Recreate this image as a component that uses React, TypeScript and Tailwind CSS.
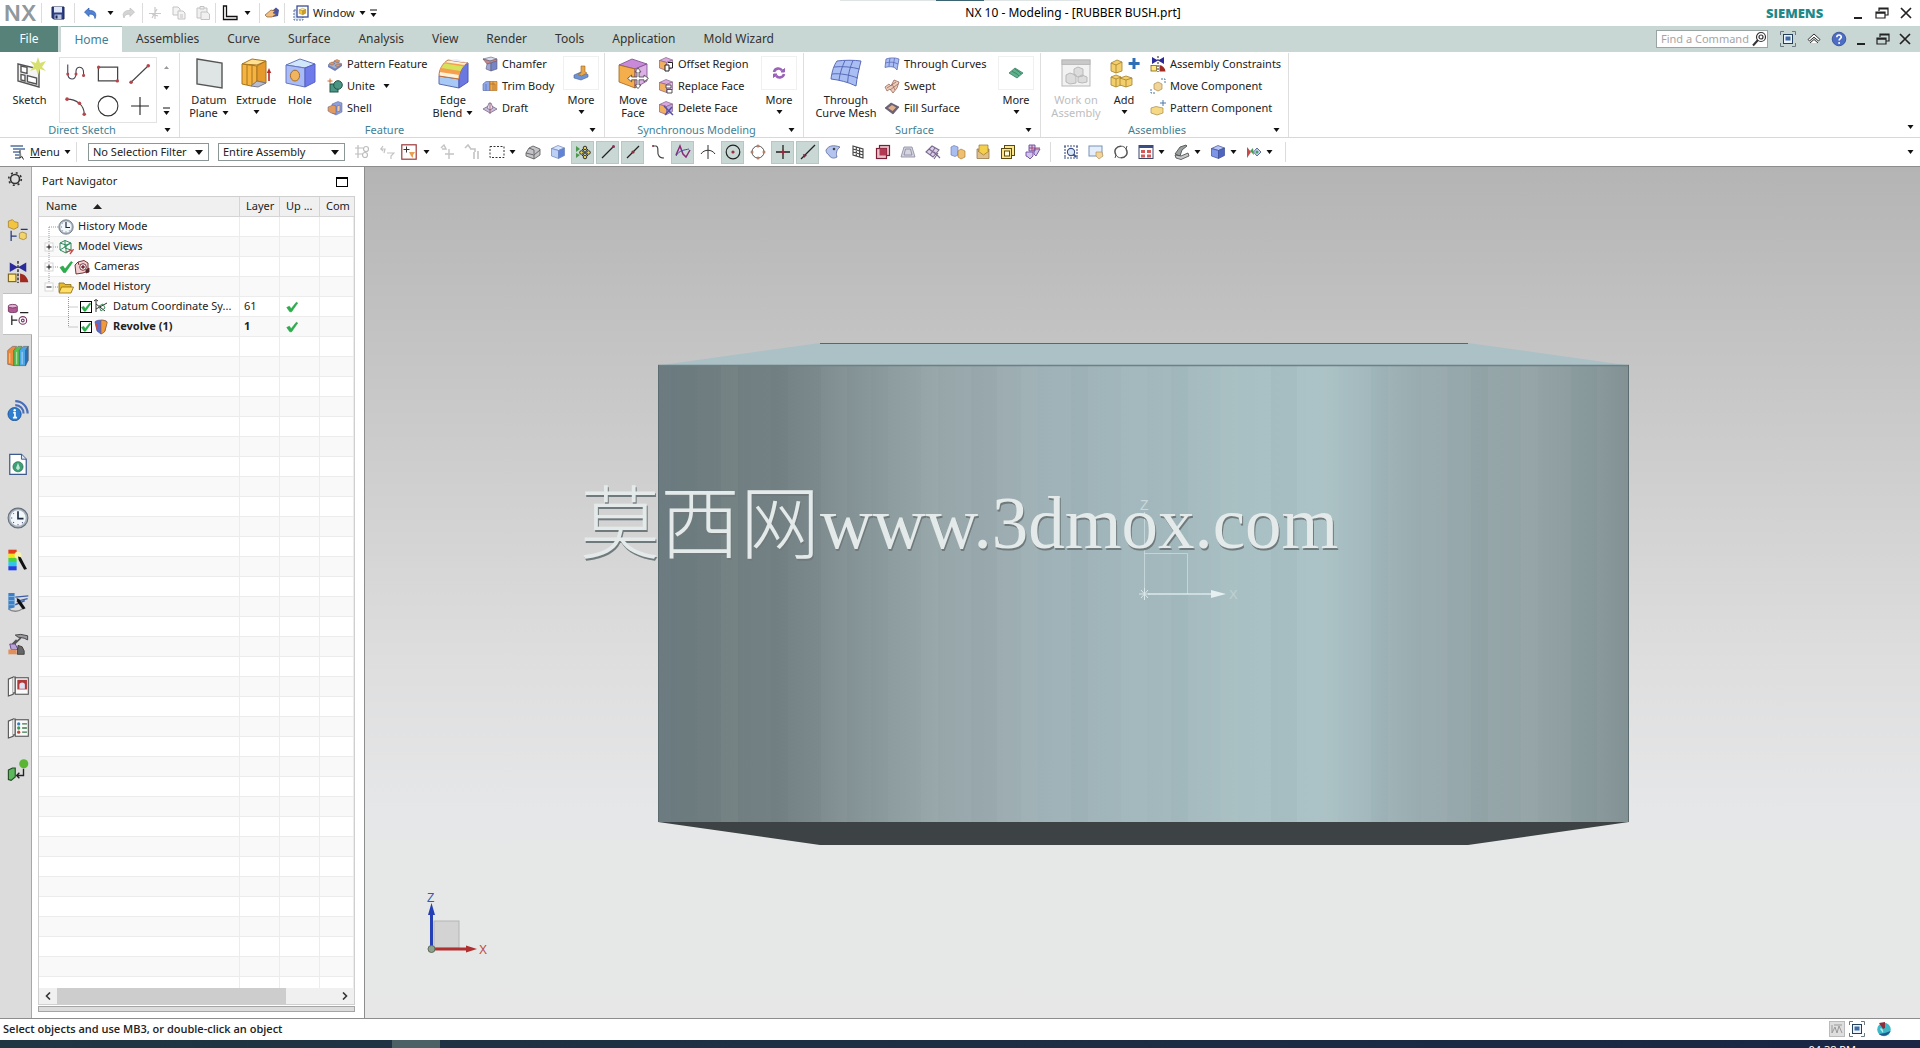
import React from "react";

type IconName = keyof typeof icons;

const CubeShape = ({ top, left, right, stroke = "#555" }: { top: string; left: string; right: string; stroke?: string }) => (
  <g stroke={stroke} strokeWidth={0.7} strokeLinejoin="round">
    <path d="M8 1.5 14.5 4 8.5 6.5 1.5 4.5Z" fill={top} />
    <path d="M1.5 4.5 8.5 6.5V14.5L1.5 12Z" fill={left} />
    <path d="M8.5 6.5 14.5 4V11.5L8.5 14.5Z" fill={right} />
  </g>
);

const Hourglass = () => (
  <g>
    <path d="M2 1 8 4.5 2 8Z" fill="#2a2a9a" />
    <path d="M14 1 8 4.5 14 8Z" fill="#2a2a9a" />
    <path d="M8 0V16" stroke="#222" strokeDasharray="2 1" />
    <rect x="1" y="9.5" width="5.5" height="5.5" fill="#ffe680" stroke="#7a6020" strokeWidth={0.8} />
    <path d="M9.500 9C13 9.500 15 12 15.500 15.500H9.500Z" fill="#a02a20" />
  </g>
);

const ClockFace = () => (
  <g>
    <circle cx="8" cy="8" r="7.200" fill="#a9b3bd" stroke="#65707c" strokeWidth={0.8} />
    <circle cx="8" cy="8" r="5.600" fill="#f2f7fb" />
    <path d="M8 3V8.500H12" fill="none" stroke="#1d2b40" strokeWidth={1.200} />
    <path d="M8 12.500V13.300M3 8H3.800M4.600 4.600 5 5M11 11.200 11.500 11.700M4.600 11.500 5 11" stroke="#446" strokeWidth={0.8} />
  </g>
);

const FilmDoor = () => (
  <g fill="#fafafa" stroke="#555" strokeWidth={0.8}>
    <path d="M1 3 4.500 1.500V14L1 15.200Z" />
    <path d="M4.500 1.500H6V13H4.500" />
    <rect x="6" y="2" width="9.500" height="12" />
  </g>
);

const icons = {
  save: (
    <g>
      <path d="M2 2H14V14H3.500L2 12.500Z" fill="#2c3f86" stroke="#1b2757" />
      <rect x="4" y="2" width="8" height="5.500" fill="#dfe7f5" />
      <rect x="4.500" y="9.500" width="7" height="4.500" fill="#b9c4dc" />
      <rect x="5.500" y="10.500" width="2" height="3" fill="#1b2757" />
    </g>
  ),
  undo: <path d="M1.500 7 6 3V5.500C11 5 14.500 8 12 13.500 11.500 10 9.500 8.800 6 9.200V11.500Z" fill="#4f83d6" stroke="#2c57a8" strokeWidth={0.7} />,
  redo: <path d="M14.500 7 10 3V5.500C5 5 1.500 8 4 13 4.500 10 6.500 8.800 10 9.200V11.500Z" fill="#d4d4d4" stroke="#bdbdbd" strokeWidth={0.7} />,
  cut: <path d="M8 2V14M2 8.500H14M10 4 5 13M5 9 11 11" stroke="#c9c9c9" strokeWidth={1.200} fill="none" />,
  copy: (
    <g fill="#f4f4f4" stroke="#c3c3c3">
      <path d="M2 2H7L9 4V10H2Z" />
      <path d="M7 6H12L14 8V14H7Z" />
      <path d="M9 10H12M9 12H12" />
    </g>
  ),
  paste: (
    <g fill="#f0f0f0" stroke="#c3c3c3">
      <path d="M2 3H12V13H2Z" />
      <path d="M5 1.500H9V4H5Z" />
      <path d="M6 7H12L14.500 9V14.500H6Z" />
    </g>
  ),
  ell: <path d="M1.500 1V14.500H15V11.500H4.500V1Z" fill="#fff" stroke="#111" strokeWidth={1.300} />,
  touch: (
    <g>
      <path d="M8 6 12 2.500 15 5 14 11 9 12Z" fill="#4c55a0" />
      <path d="M1 10 7 5 11 6 9 8 12 9 8 12 3 12Z" fill="#f0bf83" stroke="#8c5c30" strokeWidth={0.7} />
    </g>
  ),
  windows: (
    <g>
      <rect x="1" y="5" width="9" height="10" fill="#dde6f5" stroke="#5a6ea8" strokeDasharray="2 1" />
      <rect x="4" y="1" width="11" height="11" fill="#fff" stroke="#3c4e94" strokeWidth={1.300} />
      <g transform="translate(5.500 2.500) scale(.5)">
        <CubeShape top="#ffef8a" left="#f5c933" right="#d69f1e" stroke="#8d6b12" />
      </g>
    </g>
  ),
  minimize: <path d="M4 13H12" stroke="#222" strokeWidth={2} />,
  restore: <path d="M2 7H11V13H2ZM5 6V3H14V10H11.500M2 8.200H11M5 4H14" fill="none" stroke="#222" strokeWidth={1.200} />,
  close: <path d="M3 3 13 13M13 3 3 13" stroke="#222" strokeWidth={1.700} />,
  search: (
    <g fill="none" stroke="#333" strokeWidth={1.200}>
      <circle cx="10" cy="6" r="4.500" />
      <circle cx="10" cy="6" r="2" />
      <path d="M7 9 2 14.500" strokeWidth={2} />
    </g>
  ),
  fullscreen: (
    <g>
      <path d="M0.500 4V0.500H4M12 0.500H15.500V4M15.500 12V15.500H12M4 15.500H0.500V12" fill="none" stroke="#6a7a80" />
      <rect x="3.500" y="3.500" width="9" height="9" fill="#eef4ff" stroke="#24405c" />
      <rect x="5.500" y="5.500" width="5" height="4" fill="#3d6ba4" />
    </g>
  ),
  collapse: <path d="M2 8.500 8 3 14 8.500 12.500 10 8 6.200 3.500 10ZM4 12 8 8.500 12 12" fill="#fff" stroke="#333" />,
  help: (
    <g>
      <circle cx="8" cy="8" r="6.800" fill="#4d6cc4" stroke="#2f4793" strokeWidth={0.8} />
      <path d="M5.800 6.200C5.800 3.300 10.400 3.400 10.300 6.100 10.200 7.700 8.100 7.800 8.100 9.600" fill="none" stroke="#fff" strokeWidth={1.600} />
      <circle cx="8.100" cy="12" r="1" fill="#fff" />
    </g>
  ),
  studio: (
    <g>
      <path d="M2 3.500 12.500 6V15L2 12Z" fill="#f4f4f4" stroke="#555" strokeWidth={0.7} />
      <path d="M3.500 4.500 6.500 5.200V8.200L3.500 7.500ZM3.500 8.700 5.500 9.200V12L3.500 11.500ZM6.700 9.300 11.300 10.500V13.500L6.700 12.300Z" fill="#fff" stroke="#555" strokeWidth={0.7} />
      <path d="M12 0 13 3 16 2 14 5 16 7 13 6 12 9 11 6 8 7 10 4.500 8 2 11 3Z" fill="#d7e06e" />
    </g>
  ),
  profile: (
    <g fill="none" stroke="#445" strokeWidth={0.8}>
      <path d="M2 1V7C2 13 8 13 8 8V6C8 2 13.500 2 13.500 7V9" />
      <g fill="#b8444c" stroke="none">
        <circle cx="2" cy="8" r="1.100" />
        <circle cx="8" cy="8" r="1.100" />
        <circle cx="13.500" cy="9" r="1.100" />
      </g>
    </g>
  ),
  rect: (
    <g>
      <rect x="1" y="3" width="14" height="10" fill="none" stroke="#444" strokeWidth={0.9} />
      <circle cx="1.200" cy="3" r="1.200" fill="#b8444c" />
      <circle cx="14.800" cy="13" r="1.200" fill="#b8444c" />
    </g>
  ),
  line: (
    <g>
      <path d="M1.500 14 14 2" stroke="#444" strokeWidth={0.8} />
      <circle cx="1.500" cy="14" r="1.300" fill="#b8444c" />
      <circle cx="14" cy="2" r="1.300" fill="#b8444c" />
    </g>
  ),
  arc: (
    <g>
      <path d="M1.500 3C8 3 14 7 14 14" fill="none" stroke="#444" strokeWidth={0.8} />
      <circle cx="1.500" cy="3" r="1.300" fill="#b8444c" />
      <circle cx="10.500" cy="6" r="1.300" fill="#b8444c" />
      <circle cx="14" cy="14" r="1.300" fill="#b8444c" />
    </g>
  ),
  circle: <circle cx="8" cy="8" r="7.200" fill="none" stroke="#333" strokeWidth={0.8} />,
  plus: <path d="M8 1.500V14.500M1.500 8H14.500" stroke="#222" strokeWidth={0.8} />,
  datumPlane: <path d="M2 1 14.500 3V15.500L2 13.500Z" fill="#dfe5e5" stroke="#555" strokeWidth={0.7} />,
  extrude: (
    <g stroke="#a8741d" strokeWidth={0.5}>
      <path d="M1 3.500 6 1 13 2 8.500 4Z" fill="#ffdf92" />
      <path d="M1 3.500 8.500 4.500V12.500L5.500 14.500 1 13.500Z" fill="#f5b340" />
      <path d="M8.500 4.500 13 2V13L8.500 12Z" fill="#e69a2b" />
      <path d="M3.500 4V14M6 4.200V14" fill="none" />
      <path d="M5.500 14.500 8.500 12 13 13 9 15Z" fill="#b7bdd0" stroke="#778" />
      <path d="M14.500 12V7" stroke="#b52a2a" strokeWidth={0.8} />
      <path d="M13.400 8 14.500 5.500 15.600 8Z" fill="#b52a2a" stroke="none" />
    </g>
  ),
  hole: (
    <g>
      <path d="M1 4 8 1 15.500 3.500 10.500 5.500Z" fill="#cfe6fb" stroke="#6776c0" strokeWidth={0.5} />
      <path d="M1 4 10.500 5.500V15L1 13Z" fill="#a9bcf5" stroke="#6776c0" strokeWidth={0.5} />
      <path d="M10.500 5.500 15.500 3.500V12.500L10.500 15Z" fill="#6f7bea" stroke="#5560c0" strokeWidth={0.5} />
      <ellipse cx="5.500" cy="9.300" rx="2.300" ry="2.700" fill="#f1b560" stroke="#a86d21" strokeWidth={0.5} />
    </g>
  ),
  patternFeature: (
    <g>
      <path d="M1 9 8 5 15 8 8 13Z" fill="#9fb0d8" stroke="#56618c" strokeWidth={0.6} />
      <path d="M2 7.500 5 6 8 7.500 5 9ZM7 5 10 3.500 13 5 10 6.500ZM8 9.500 11 8 14 9 11 11Z" fill="#e09a66" stroke="#9a5a30" strokeWidth={0.5} />
      <path d="M1 9V11L8 15V13ZM8 13V15L15 10V8Z" fill="#6f7fb8" />
    </g>
  ),
  unite: (
    <g>
      <rect x="3" y="6" width="8" height="8" fill="#4a9583" stroke="#235547" />
      <circle cx="11" cy="7" r="4.300" fill="#4a9583" stroke="#235547" />
      <path d="M3 0.500V5.500M0.500 3H5.500" stroke="#c96a2d" />
    </g>
  ),
  shell: (
    <g stroke="#555f8c" strokeWidth={0.5}>
      <path d="M5 4 11 1.500 15 3V12L9 15 5 13Z" fill="#8f9fda" />
      <path d="M1 7 6 5 9 6V14L4 13 1 11Z" fill="#e39a5e" />
      <path d="M10 6 13 5V11L10 12Z" fill="#f0c9a0" />
    </g>
  ),
  edgeBlend: (
    <g strokeWidth={0.5}>
      <path d="M1 9.500 11 11V15.500L1 13.500Z" fill="#a8c8f5" stroke="#5c6cb0" />
      <path d="M11 11C11 7 13 4 15.500 3V12.500L11 15.500Z" fill="#6a78e0" stroke="#4c58b8" />
      <path d="M1 9.500C1 6 3 3 5.500 1.500L15.500 3C13 4 11 7 11 11Z" fill="#fff2d8" stroke="#c07030" />
      <path d="M1.300 7.500C1.800 5 3 3.300 4.300 2.600L14 4C12.500 5 11.500 7 11.200 9Z" fill="#f6a04f" />
      <path d="M2.200 5.500C2.800 4.300 3.400 3.600 4 3.200L13.300 4.700C12.500 5.300 12 6.200 11.700 7Z" fill="#d4e25c" />
      <path d="M5.500 1.500 10 1 15.500 3Z" fill="#eef" />
    </g>
  ),
  chamfer: (
    <g stroke="#5a5a78" strokeWidth={0.6}>
      <path d="M1 3 9 1 15 3 8 5Z" fill="#d8dcea" />
      <path d="M1 3 5 8 15 5V3L8 5Z" fill="#c98585" />
      <path d="M5 8 9 7V15L4 13Z" fill="#9aa6d6" />
      <path d="M9 7 15 5V13L9 15Z" fill="#7684c8" />
    </g>
  ),
  trimBody: (
    <g strokeWidth={0.6}>
      <path d="M1 6 4 3.500H8V12.500H1Z" fill="#8fa8e8" stroke="#4d5fa8" />
      <path d="M8 3.500H15V12.500H8Z" fill="#f0a94e" stroke="#a0641c" />
      <path d="M8 6H13V12M11 3.500V12.500" fill="none" stroke="#a0641c" />
      <path d="M4 6V12.500" stroke="#4d5fa8" />
    </g>
  ),
  draft: (
    <g fill="#c9bcd8" stroke="#6c5c80" strokeWidth={0.7}>
      <path d="M1 9 8 5 15 9 8 13Z" />
      <path d="M5 8 7 3 9 3 11 8 8 10Z" fill="#e8def0" />
      <path d="M8 3V14" stroke="#94404c" />
    </g>
  ),
  moreFeature: (
    <g>
      <path d="M1 10 8 7 15 9.500V12L8 15 1 13Z" fill="#6f93d0" stroke="#425f9c" strokeWidth={0.6} />
      <path d="M8 1H12V7L14 8 8.500 11 5 9 8 8Z" fill="#e8a64a" stroke="#9a6420" strokeWidth={0.6} />
    </g>
  ),
  moveFace: (
    <g>
      <path d="M1 4 7.500 1 15 3.500 9 6Z" fill="#c88ad8" stroke="#7a4a8c" strokeWidth={0.4} />
      <path d="M1 4 9 6V15.500L1 12.500Z" fill="#f5ae4c" stroke="#9a641c" strokeWidth={0.4} />
      <path d="M9 6 15 3.500V12L9 15.500Z" fill="#dcb0e6" stroke="#7a4a8c" strokeWidth={0.4} />
      <path d="M10.500 5.500 12 7.500H11V10H13.500V9L15.700 10.700 13.500 12.400V11.400H11V14H12L10.500 15.800 9 14H10V11.400H7.300V12.400L5.300 10.700 7.300 9V10H10V7.500H9Z" fill="#fff" stroke="#444" strokeWidth={0.4} />
    </g>
  ),
  offsetRegion: (
    <g>
      <CubeShape top="#dba8de" left="#f0b060" right="#e8b8e8" stroke="#86608c" />
      <path d="M7 9H11V15H7ZM10 6.500H14.500V12H11" fill="#fff" stroke="#222" strokeWidth={1} />
    </g>
  ),
  replaceFace: (
    <g>
      <CubeShape top="#dba8de" left="#f0b060" right="#e8b8e8" stroke="#86608c" />
      <path d="M8 7H13V10H8ZM9 11.500H14V15H9Z" fill="#fff" stroke="#444" strokeWidth={0.9} />
    </g>
  ),
  deleteFace: (
    <g>
      <CubeShape top="#dba8de" left="#f0b060" right="#b8a8e8" stroke="#86608c" />
      <path d="M6 6 15 15M14 7 7 15" stroke="#5b4f9c" strokeWidth={1.500} />
    </g>
  ),
  moreSync: (
    <g fill="none" stroke="#9a62b8" strokeWidth={2.600}>
      <path d="M3 7C4 3 9 2.500 11 5.500" />
      <path d="M13 9C12 13 7 13.500 5 10.500" />
      <path d="M10 7H13.500V3.500ZM6 9H2.500V12.500Z" strokeWidth={1} fill="#9a62b8" />
    </g>
  ),
  curveMesh: (
    <g fill="#a9bff3" stroke="#5a6ab8" strokeWidth={0.5}>
      <path d="M3.500 2C7 1.500 12 1.500 15.500 2 14.500 6 13.500 10 13 14.500 9 12.500 4.500 11.500 0.500 11 1 7 2 4 3.500 2Z" />
      <path d="M2 5C6 4.500 11 5 14.700 6M1 8.500C5 8 10 9 13.800 10.500M7.500 1.700C6 5 5 8 4.500 11.500M11.500 1.700C10 5 9 9 8.800 12.800" fill="none" />
    </g>
  ),
  throughCurves: (
    <g fill="#a9bff3" stroke="#5a6ab8" strokeWidth={0.8}>
      <path d="M2 3C6 1.500 11 1.500 15 3L13 14C11 10.500 6 10 1 11.500Z" />
      <path d="M6 2C5.500 5 5 8 5 10.500M10.500 2C10 5 9.500 8 9.300 11M1.500 7C6 5.500 10 6 14 8" fill="none" />
    </g>
  ),
  swept: (
    <g fill="#eccdbd" stroke="#9c6a58" strokeWidth={0.8}>
      <path d="M1 9 5 6 7 8 10 2 15 4 13 10 9 15 6 11 3 13Z" />
      <path d="M3 10 12 4M6 12 14 6M8 6 11 12" fill="none" />
    </g>
  ),
  fillSurface: (
    <g>
      <path d="M1 8 7 3 15 7 9 14Z" fill="#6e6478" stroke="#4a4252" strokeWidth={0.6} />
      <path d="M4 8 8 5 12 7.500 8.500 11Z" fill="#e3b08c" />
    </g>
  ),
  moreSurface: (
    <g>
      <path d="M1 8 7 3 15 8 9 13Z" fill="#5fb08c" stroke="#2c7558" strokeWidth={0.7} />
      <path d="M4 6C6 8 9 8 11 11M7 4C9 6 11 6 13 9" fill="none" stroke="#2c7558" strokeWidth={0.7} />
    </g>
  ),
  workOn: (
    <g stroke="#b9b9b9" strokeWidth={0.5}>
      <rect x="1" y="1.500" width="14" height="13" fill="#f2f2f2" />
      <rect x="1" y="1.500" width="14" height="2.200" fill="#c9c9c9" />
      <path d="M3 9 5 8 8 9V13L5 13.500 3 12.500ZM7 6 9 5 11.500 6V9.500L9 10 7 9ZM9 10 11 9 13.500 10V12.500L11 13 9 12.500Z" fill="#dcdcdc" />
    </g>
  ),
  add: (
    <g>
      <g stroke="#a5802c" strokeWidth={0.4} fill="#f3cf6b">
        <path d="M1.500 3 4.500 1.500 7 2.500V7L4 8 1.500 7Z" />
        <path d="M1.500 10 4 9 6.500 10V14L4 15 1.500 14Z" />
        <path d="M6 10.500 9 9.500 12 10.500V14L9 15 6 14Z" />
        <path d="M1.500 3 4 4 7 2.500M4 4V8M1.500 10 4 11 6.500 10M6 10.500 9 11.500 12 10.500M4 11V15M9 11.500V15" fill="none" />
      </g>
      <path d="M13 0.500V6M10.300 3.200H15.800" stroke="#2f6fb5" strokeWidth={1.500} />
    </g>
  ),
  constraints: <Hourglass />,
  moveComponent: (
    <g>
      <path d="M4 6 8 4 12 6V11L8 13 4 11Z" fill="#f0d49a" stroke="#a98a45" strokeWidth={0.7} />
      <path d="M11 1H15V5M1 11V15H5" fill="none" stroke="#4a7aa8" strokeDasharray="2 1" />
    </g>
  ),
  patternComponent: (
    <g>
      <path d="M1 8 6 6.500 13 8V13L7 15 1 13Z" fill="#f5d984" stroke="#a98a45" strokeWidth={0.7} />
      <path d="M13 0V6M10 3H16" stroke="#4a7aa8" />
    </g>
  ),
  menu: (
    <g fill="none" stroke="#54719c" strokeWidth={1.300}>
      <path d="M0.500 2H13M3 5H15M3 8H10M5 11H9M5 14H10" />
      <path d="M10 6V14L12 12.500 13.500 15.500" stroke="#333" fill="#ddd" strokeWidth={1} />
    </g>
  ),
  filterGray: (
    <g fill="none" stroke="#bdbdbd" strokeWidth={1.200}>
      <path d="M4 1V14M1 4H9M1 10H9" />
      <circle cx="12" cy="5" r="2.500" />
      <circle cx="11" cy="11" r="2.500" />
    </g>
  ),
  filterGray2: <path d="M1 5H6L5 9M4 2 2 5 4 7M8 9H15L12 12V15" fill="none" stroke="#c4c4c4" strokeWidth={1.200} />,
  snapBox: (
    <g fill="none">
      <rect x="0.800" y="0.800" width="14.400" height="14.400" stroke="#9b3a3a" strokeWidth={1.200} />
      <path d="M5.500 2.500V8.500M2.500 5.500H8.500" stroke="#333" />
      <path d="M8 8H14L12 11V14L10 12Z" fill="#e8a050" />
    </g>
  ),
  moveGray: <path d="M2 4 5 1 7 5H3M10 5V15M6 10H15" fill="none" stroke="#c4c4c4" strokeWidth={1.400} />,
  copyGray: <path d="M1 4 4 1 7 5M6 5H11V8M10 8V15M14 7V15" fill="none" stroke="#c4c4c4" strokeWidth={1.600} />,
  marquee: <rect x="1" y="2.500" width="14" height="11" fill="none" stroke="#333" strokeDasharray="2 1.500" />,
  grayBlock: (
    <g fill="#c3c3c8" stroke="#555" strokeWidth={0.8}>
      <path d="M1 9 4 4 8 2 15 5 15 11 9 15 1 12Z" />
      <path d="M1 9 9 11 15 6M9 11V15M4 4 9 6V10" fill="none" />
    </g>
  ),
  blueBlock: <CubeShape top="#d5e2fb" left="#bcd0f7" right="#5f83d9" stroke="#6d83b8" />,
  snapAll: (
    <g>
      <path d="M1 2 5 5 1 8ZM1 9 5 11 1 14Z" fill="#4a9a4a" />
      <path d="M7 5 13 12M13 5 7 12" stroke="#222" />
      <g fill="#e6d34a" stroke="#222" strokeWidth={0.9}>
        <circle cx="10" cy="4" r="1.800" />
        <circle cx="6.500" cy="8.500" r="1.800" />
        <circle cx="13.500" cy="8.500" r="1.800" />
        <circle cx="10" cy="13" r="1.800" />
      </g>
    </g>
  ),
  endPoint: (
    <g>
      <path d="M2 14 13 3" stroke="#222" strokeWidth={1.200} />
      <circle cx="13.500" cy="2.500" r="1.500" fill="#8c2f5a" />
    </g>
  ),
  midPoint: (
    <g>
      <path d="M2 14 14 2" stroke="#222" strokeWidth={1.200} />
      <circle cx="8" cy="8" r="1.600" fill="#8c2f3a" />
    </g>
  ),
  controlPoint: (
    <g>
      <path d="M3 2H6C10 3 6 9 9 12 10 14 12 14 14 14" fill="none" stroke="#444" strokeWidth={1.200} />
      <circle cx="3" cy="2" r="1" fill="#8c2f3a" />
    </g>
  ),
  pole: (
    <g fill="none" stroke="#8a2a78" strokeWidth={1.500}>
      <path d="M1 11 5 2 8 10 11 13 15 6" />
      <path d="M1 12C4 6 10 6 14 5" stroke="#444a9c" strokeWidth={1} />
    </g>
  ),
  intersection: <path d="M8 1V15M1 10C4 5 12 5 15 10" fill="none" stroke="#333" />,
  arcCenter: (
    <g>
      <circle cx="8" cy="8" r="6.800" fill="none" stroke="#222" strokeWidth={1.200} />
      <circle cx="8" cy="8" r="1.600" fill="#9c2f3a" />
    </g>
  ),
  quadrant: (
    <g>
      <circle cx="8" cy="8" r="6" fill="none" stroke="#555" />
      <g fill="#b8806a">
        <circle cx="8" cy="2" r="1.500" />
        <circle cx="8" cy="14" r="1.500" />
        <circle cx="2" cy="8" r="1.500" />
        <circle cx="14" cy="8" r="1.500" />
      </g>
    </g>
  ),
  existingPoint: (
    <g>
      <path d="M8 1V15M1 8H15" stroke="#222" strokeWidth={1.300} />
      <path d="M5.500 8H10.500M8 5.500V10.500" stroke="#a02a3a" strokeWidth={1.300} />
    </g>
  ),
  pointOnCurve: (
    <g>
      <path d="M1 15 15 1" stroke="#222" strokeWidth={1.200} />
      <path d="M3 10 7 11 4 14Z" fill="#7a2a3a" />
    </g>
  ),
  pointOnSurface: (
    <g>
      <path d="M1 6C4 1 9 1 15 3 11 6 11 10 12 13 9 15 5 14 4 11 2 10 1 8 1 6Z" fill="#b4c4ee" stroke="#5b6a9c" strokeWidth={0.8} />
      <circle cx="9" cy="5" r="1.300" fill="#444" />
    </g>
  ),
  grid: <path d="M3 2 13 5V14L3 11ZM3 5 13 8M3 8 13 11M6.300 3V12M9.600 4V13" fill="none" stroke="#444" strokeWidth={1.100} />,
  redCube: (
    <g>
      <rect x="4.500" y="1.500" width="10" height="10" fill="#e7c4cc" stroke="#7a1f35" strokeWidth={1.200} />
      <rect x="1.500" y="4.500" width="10" height="10" fill="#e7c4cc" stroke="#7a1f35" strokeWidth={1.200} />
      <rect x="4.500" y="4.500" width="7" height="7" fill="#b43a54" />
    </g>
  ),
  plane: <path d="M4 3H12L15 13H1ZM5.500 5H10.500L12 11H4Z" fill="#d5d5e0" stroke="#85859c" strokeWidth={0.8} />,
  zebra: (
    <g fill="none" stroke="#7a6a90" strokeWidth={1.100}>
      <path d="M1 8 7 2 14 6 8 13Z" fill="#dcd0e8" />
      <path d="M4 5 11 10M10 4 5 11M9 8 15 14M13 9 9 15" />
    </g>
  ),
  twoCubes: (
    <g strokeWidth={0.6}>
      <path d="M1 3 4 1.500 8 3V11L5 12.500 1 11Z" fill="#a9bdf0" stroke="#5b6fae" />
      <path d="M8 7 11 5 15 7V13L11 15 8 13Z" fill="#f0c070" stroke="#9a6e28" />
    </g>
  ),
  yellowBox: (
    <g strokeWidth={0.7}>
      <path d="M2 5H14V14.500H2Z" fill="#e0c08a" stroke="#8a6a3c" />
      <path d="M4 1H13V7H14L8.500 11 3 7H4Z" fill="#f4cf4c" stroke="#9a7620" />
    </g>
  ),
  wireYellow: (
    <g fill="#fbe68a" stroke="#5a4a10" strokeWidth={1}>
      <rect x="4.500" y="1.500" width="10" height="10" />
      <rect x="1.500" y="4.500" width="10" height="10" />
      <rect x="4.500" y="7" width="5" height="5" fill="#fffbe0" />
    </g>
  ),
  purpleFilter: (
    <g fill="#d3c4ee" stroke="#6a4a9c" strokeWidth={0.9}>
      <path d="M1 8H8V12L5 15 3 13 1 12Z" />
      <path d="M4 1H10V7H4ZM9 5H15L11 12 9 10Z" />
      <path d="M7 1V7M4 4H15" fill="none" stroke="#a04060" />
    </g>
  ),
  fit: (
    <g fill="none" stroke="#3c4e84" strokeWidth={1.100}>
      <path d="M1 2H15M1 14H15" strokeDasharray="2 1" />
      <path d="M2 2V14M14 2V14" strokeDasharray="2 1" />
      <circle cx="8" cy="8" r="3.600" fill="#dbe6f7" />
      <path d="M10.500 10.500 13 13" strokeWidth={2} />
    </g>
  ),
  zoomWin: (
    <g>
      <rect x="1" y="2" width="13" height="10" fill="#e4eefa" stroke="#7890b8" />
      <path d="M8 8H14L15 12 11 15 8 12Z" fill="#f2d49a" stroke="#a88850" strokeWidth={0.6} />
    </g>
  ),
  rotate: (
    <g fill="none" stroke="#555" strokeWidth={1.500}>
      <path d="M3 11C0 6 4 2 8 2.200M13 5C16 10 12 14 8 13.800" />
      <path d="M8 2.200C10 2.200 12 3 13 5L14 2M3 11 2 14M8 13.800C6 13.800 4 13 3 11" strokeWidth={1} />
    </g>
  ),
  layout: (
    <g>
      <rect x="1" y="1.500" width="14" height="13" fill="#fff" stroke="#3a4468" />
      <rect x="1" y="1.500" width="14" height="2.500" fill="#3a4e84" />
      <path d="M3 6H7V9H3ZM9 6H13V9H9ZM3 10.500H7V13.500H3ZM9 10.500H13V13.500H9Z" fill="#d45a5a" />
    </g>
  ),
  shading: (
    <g fill="#9aa0a0" stroke="#444" strokeWidth={0.8}>
      <path d="M1 10 6 3 12 1 13 2 8 6 6 12Z" />
      <path d="M1 11 7 12 14 9 15 12 7 15.500 2 14Z" fill="#c4c8c8" />
    </g>
  ),
  blueCube: <CubeShape top="#b5c4f5" left="#7d95e6" right="#4e66bf" stroke="#3c4e94" />,
  colorDots: (
    <g>
      <path d="M1 3 5 8 1 14Z" fill="#c94a4a" />
      <path d="M4 7 7 4 8 11Z" fill="#4a9a5a" />
      <path d="M11 4 15 8 11 12 7.500 8Z" fill="#c8d4ee" stroke="#5a6ea0" />
      <circle cx="11" cy="8" r="1.500" fill="#4aa060" />
    </g>
  ),
  gear: (
    <g fill="none" stroke="#333">
      <circle cx="8" cy="8" r="4.500" strokeWidth={1.600} />
      <circle cx="8" cy="8" r="6.300" strokeWidth={1.600} strokeDasharray="2 2.950" />
    </g>
  ),
  assemblyNav: (
    <g>
      <path d="M1 1.500 4 0.500 5.500 2 8 2.500V6L5 7.500 1 6Z" fill="#f2c43f" stroke="#9a7620" strokeWidth={0.5} />
      <path d="M10 7.500H15M3 8.500V16M3 12.500H7" stroke="#223a7a" fill="none" strokeWidth={0.9} />
      <path d="M9 10.500 11 9.500 14 10.500V14L12 15 9 14Z" fill="#f2d46a" stroke="#9a7620" strokeWidth={0.5} />
    </g>
  ),
  constraintNav: <Hourglass />,
  partNav: (
    <g fill="none">
      <path d="M1 2.500V6C1 7.300 7.500 7.300 7.500 6V2.500" fill="#b05a94" stroke="#6a2a58" strokeWidth={0.6} />
      <ellipse cx="4.200" cy="2.300" rx="3.300" ry="1.300" fill="#e4b0d2" stroke="#6a2a58" strokeWidth={0.6} />
      <path d="M9.500 7H15.500M3.500 9V16M3.500 12.500H7.500" stroke="#222" strokeWidth={0.9} />
      <circle cx="11.500" cy="12.700" r="2.800" stroke="#7a3a68" strokeWidth={0.8} />
      <circle cx="11.500" cy="12.700" r="1" stroke="#7a3a68" strokeWidth={0.8} />
    </g>
  ),
  books: (
    <g strokeWidth={0.4} stroke="#555">
      <path d="M0.500 4 4 1H7L5 4V15L0.500 14Z" fill="#ef8a3c" />
      <path d="M5 4 8 1H11L9 4V15H5Z" fill="#54c34a" />
      <path d="M9 4 12 1H15.500L13.500 4V15H9Z" fill="#4aa6e6" />
      <path d="M13.500 4 15.500 1V11L13.500 15Z" fill="#2c70b8" />
      <path d="M2 6V13M7 5V14M11 5V14" stroke="#fff" />
    </g>
  ),
  info: (
    <g fill="none">
      <circle cx="5.500" cy="11" r="4.800" fill="#2f7fd0" stroke="#1b4f94" strokeWidth={0.6} />
      <path d="M4.500 10H5.800V13.300M4.300 13.500H7.300" stroke="#fff" strokeWidth={1.200} />
      <circle cx="5.600" cy="8.200" r="0.900" fill="#fff" />
      <path d="M6 4.500C9.500 4.500 12 7 12 10.500M6 1.500C11 1.500 15 5.500 15 10.500" stroke="#4a6db8" strokeWidth={1.600} />
    </g>
  ),
  page: (
    <g>
      <path d="M2 1H10.500L14 4.500V15.500H2Z" fill="#fff" stroke="#3c5a8c" strokeWidth={0.9} />
      <path d="M10.500 1V4.500H14" fill="#dde7f5" stroke="#3c5a8c" strokeWidth={0.7} />
      <circle cx="8" cy="10" r="3.700" fill="#3fa077" stroke="#256a4c" strokeWidth={0.5} />
      <path d="M8 7 9.500 11 8 12.500 6.500 11Z" fill="#bfe8d8" />
    </g>
  ),
  clock: <ClockFace />,
  spectrum: (
    <g>
      <rect x="1" y="0.500" width="6" height="3" fill="#e2401c" />
      <rect x="1" y="3.500" width="6" height="3" fill="#f2e11c" />
      <rect x="1" y="6.500" width="6" height="3" fill="#4cd43c" />
      <rect x="1" y="9.500" width="6" height="3" fill="#2cc8e8" />
      <rect x="1" y="12.500" width="6" height="3" fill="#2340e0" />
      <circle cx="8" cy="4.500" r="2.500" fill="#f6f2b0" />
      <path d="M8 5.500 10 6 14.500 14.500 12.500 15 8.500 8Z" fill="#111" />
    </g>
  ),
  blueTools: (
    <g>
      <path d="M1 13C4 15.500 9 15 11 13" fill="none" stroke="#888" />
      <path d="M1 1.500H5.500V12L1 13Z" fill="#3c7fc4" />
      <path d="M1 4H5.500M1 7H5.500M1 10H5.500" stroke="#8fbce8" strokeWidth={0.6} />
      <path d="M6 4.500 15.500 3.500M7 7.500 15 5.500M6 10 13 7" stroke="#3c5ea4" strokeWidth={1} fill="none" />
      <path d="M7 5 9 6 13.500 12.500 11.500 13.500 7.500 8Z" fill="#111" />
    </g>
  ),
  robot: (
    <g>
      <path d="M8 3 6 1.500 10 1 15 2V5L12.500 3.800 11 3.500Z" fill="#9a9aa4" stroke="#444" strokeWidth={0.7} />
      <path d="M10 3.500 5.500 8M7 5 4 8" stroke="#555" strokeWidth={1.200} />
      <path d="M2 8H6L8 12H3Z" fill="#b9a4d4" stroke="#5a3a7c" strokeWidth={0.6} />
      <path d="M1 12H7V15.500H1Z" fill="#e0905a" />
      <path d="M8 9 11 10 12.500 13V15.500H7.500Z" fill="#666" stroke="#333" strokeWidth={0.6} />
    </g>
  ),
  doorRed: (
    <g>
      <FilmDoor />
      <rect x="7.500" y="3.500" width="7" height="7" fill="#b03a3a" />
      <path d="M9 10V7C9 5 13 5 13 7V10Z" fill="#dde4f5" />
    </g>
  ),
  doorList: (
    <g>
      <FilmDoor />
      <circle cx="8.500" cy="5" r="1.200" fill="#3c7fc4" />
      <circle cx="8.500" cy="8" r="1.200" fill="#3a9a5a" />
      <circle cx="8.500" cy="11" r="1.200" fill="#c04a3a" />
      <path d="M11 5H14.500M11 8H14.500M11 11H14.500" stroke="#3a7a4a" />
    </g>
  ),
  doorGreen: (
    <g>
      <path d="M1 8 4 6.500H6V13L3 15.500 1 15Z" fill="#5cb85c" stroke="#234a23" strokeWidth={0.8} />
      <circle cx="12.200" cy="3.500" r="3.300" fill="#5ab532" />
      <path d="M12 7V12H7M9 10 7 12 9 14" fill="none" stroke="#222" />
    </g>
  ),
  modelViews: (
    <g fill="none" stroke="#2f8a5c">
      <path d="M2 4 7 1.500 13 4V11L8 14 2 11ZM2 4 8 6 13 4M8 6V14M2 11 13 4M7 1.500V9L13 11" />
      <path d="M8 13 15 11 12 15" stroke="#c0504a" strokeWidth={1.300} />
    </g>
  ),
  camera: (
    <g stroke="#6a1f28" strokeWidth={0.9}>
      <path d="M1 6 4 3 10 1.500 14 4V12L9 14 2 15Z" fill="#f0d0d0" />
      <circle cx="9" cy="8" r="3.300" fill="#fff" />
      <circle cx="9" cy="8" r="1.300" fill="#8c3a48" />
      <path d="M4 3 5 6M12 11 15 9V13L12 14Z" fill="#333" />
    </g>
  ),
  folder: (
    <g stroke="#8a6a10" strokeWidth={0.8}>
      <path d="M1 4H6L7 5.500H13V13H1Z" fill="#e8b92c" />
      <path d="M3.500 8H15.500L13 14H1Z" fill="#ffdf6a" />
    </g>
  ),
  csys: (
    <g fill="none" stroke="#333">
      <path d="M3 13V1M3 5 12 12M3 10 14 4M1 2 3 0.500 5 2" />
      <path d="M6 7 10 5 12 9 8 12Z" stroke="#3a8a5a" />
    </g>
  ),
  revolve: (
    <g strokeWidth={0.6}>
      <path d="M2 3C2 0.500 14 0.500 14 3L12 12 8 15 4 12Z" fill="#5a6ad4" stroke="#33408c" />
      <path d="M8 1.200C13 1.200 14.500 3 14 4.500L11.500 13 8 15Z" fill="#f09a3c" stroke="#a05a1c" />
      <path d="M2 4 5 5V12L3.500 10Z" fill="#d04a3c" />
    </g>
  ),
  tick: <path d="M2 8.500 5 7 7 10 13 2.500 14.500 3.500 7.500 13.500 5.500 13.500Z" fill="#2ab04a" stroke="#1f9a3c" strokeWidth={0.6} />,
  statusChart: (
    <g>
      <rect x="0.500" y="0.500" width="15" height="15" fill="#dedede" stroke="#bbb" />
      <path d="M3 4V12L6 6 8 12 10 5 13 12M5 4H13" fill="none" stroke="#999" />
    </g>
  ),
  ball: (
    <g>
      <circle cx="8" cy="8.500" r="6.800" fill="#3cb8c8" />
      <path d="M3 13C6 16 13 15 14.500 10L9 12Z" fill="#1f5a8c" />
      <path d="M3 2 9 1 9 7 7 8Z" fill="#8c2f3a" />
      <path d="M4 8C5 6 8 9 7 12Z" fill="#a8eef0" />
    </g>
  ),
};

const Icon = ({ name, className = "size-4" }: { name: IconName; className?: string }) => (
  <svg viewBox="0 0 16 16" className={`shrink-0 ${className}`} aria-hidden="true">
    {icons[name]}
  </svg>
);

const Caret = ({ className = "" }: { className?: string }) => (
  <svg viewBox="0 0 7 4" className={`inline-block h-1 w-[7px] shrink-0 ${className}`} aria-hidden="true">
    <path d="M0.500 0H6.500L3.500 4Z" fill="#111" />
  </svg>
);

const BarCaret = () => (
  <svg viewBox="0 0 7 8" className="h-2 w-[7px] shrink-0" aria-hidden="true">
    <path d="M0 1H7" stroke="#111" />
    <path d="M0.500 4H6.500L3.500 8Z" fill="#111" />
  </svg>
);

const Divider = () => <span className="h-5 w-px shrink-0 bg-[#dcdcdc]" />;

const IconButton = ({ icon, label, className = "w-6", size = "size-4" }: { icon: IconName; label: string; className?: string; size?: string }) => (
  <button aria-label={label} className={`flex h-6 shrink-0 items-center justify-center ${className}`}>
    <Icon name={icon} className={size} />
  </button>
);

const TitleBar = () => (
  <header className="relative flex h-[26px] shrink-0 items-center bg-white">
    <div className="absolute left-1/2 top-0 h-px w-60 -translate-x-1/2 bg-[#dfe4e4]">
      <div className="mx-auto h-px w-12 bg-[#3b6472]" />
    </div>
    <div className="flex w-[378px] shrink-0 items-center">
      <span className="w-[41px] pl-1 font-[Inter] text-[22px] font-semibold leading-6 text-[#8f989c]">NX</span>
      <Divider />
      <IconButton icon="save" label="Save" className="w-8" />
      <Divider />
      <IconButton icon="undo" label="Undo" className="w-8" />
      <Caret />
      <IconButton icon="redo" label="Redo" className="w-7" />
      <Divider />
      <IconButton icon="cut" label="Cut" className="w-6" />
      <IconButton icon="copy" label="Copy" />
      <IconButton icon="paste" label="Paste" />
      <Divider />
      <IconButton icon="ell" label="Orientation" className="w-7" />
      <Caret />
      <span className="w-2" />
      <Divider />
      <IconButton icon="touch" label="Touch mode" />
      <Divider />
      <button className="flex items-center gap-1 pl-2 text-[11px] leading-4">
        <Icon name="windows" />
        Window
        <Caret />
      </button>
      <span className="w-1" />
      <BarCaret />
    </div>
    <h1 className="flex-1 pl-1 text-center text-xs leading-4 text-black">NX 10 - Modeling - [RUBBER BUSH.prt]</h1>
    <div className="flex w-[156px] shrink-0 items-center">
      <span className="w-[82px] pl-0.5 font-['Open_Sans'] text-[13px] font-extrabold leading-4 text-[#1f8a8c]">SIEMENS</span>
      <IconButton icon="minimize" label="Minimize" />
      <IconButton icon="restore" label="Restore" />
      <IconButton icon="close" label="Close" />
    </div>
  </header>
);

const tabs = ["Assemblies", "Curve", "Surface", "Analysis", "View", "Render", "Tools", "Application", "Mold Wizard"];

const TabBar = () => (
  <nav className="flex h-[26px] shrink-0 items-stretch bg-[#c9d7d4] text-xs leading-4 text-[#333]">
    <button className="w-[58px] bg-[#568279] text-white">File</button>
    <button className="ml-[3px] w-[61px] border-t border-[#9bb5b0] bg-white text-[#3c7f96]">Home</button>
    {tabs.map((tab) => (
      <button key={tab} className="px-[14px]">
        {tab}
      </button>
    ))}
    <div className="ml-auto flex items-center pr-1">
      <label className="mr-2 flex h-[18px] w-[112px] items-center border border-[#9aa5a3] bg-white">
        <input aria-label="Find a Command" placeholder="Find a Command" className="w-0 flex-1 pl-1 text-[11px] leading-4 outline-none placeholder:text-[#a5a5a5]" />
        <Icon name="search" />
      </label>
      <IconButton icon="fullscreen" label="Full screen" />
      <IconButton icon="collapse" label="Minimize ribbon" className="w-7" />
      <IconButton icon="help" label="Help" className="w-[22px]" />
      <IconButton icon="minimize" label="Minimize part window" className="w-[22px]" />
      <IconButton icon="restore" label="Restore part window" className="w-[22px]" />
      <IconButton icon="close" label="Close part window" className="w-[22px]" />
    </div>
  </nav>
);

interface GroupProps {
  title: string;
  className: string;
  children: React.ReactNode;
}

const Group = ({ title, className, children }: GroupProps) => (
  <section className={`flex shrink-0 flex-col border-r border-[#dedede] ${className}`}>
    <div className="flex h-[70px] items-start">{children}</div>
    <div className="flex items-center justify-center leading-[14px] text-[#3f7f96]">
      <span className="flex-1 text-center">{title}</span>
      <Caret className="mr-2" />
    </div>
  </section>
);

interface BigButtonProps {
  icon: IconName;
  lines: string[];
  caret?: boolean;
  disabled?: boolean;
  boxed?: boolean;
  className: string;
}

const BigButton = ({ icon, lines, caret, disabled, boxed, className }: BigButtonProps) => (
  <button disabled={disabled} className={`flex shrink-0 flex-col items-center pt-[3px] text-center leading-[13px] disabled:text-[#bdbdbd] ${className}`}>
    <span className={boxed ? "mb-[3px] flex h-[34px] w-9 items-center justify-center border border-[#f0f0f0]" : "mb-[3px] flex h-[34px] items-center"}>
      <Icon name={icon} className={boxed ? "size-4" : "size-8"} />
    </span>
    {lines.map((line, i) => (
      <span key={line} className="flex items-center gap-1 whitespace-nowrap">
        {line}
        {caret && i === 1 && <Caret />}
      </span>
    ))}
    {caret && lines.length === 1 && <Caret className="mt-1" />}
  </button>
);

const SmallButtons = ({ items, className }: { items: [IconName, string, boolean?][]; className: string }) => (
  <div className={`flex shrink-0 flex-col ${className}`}>
    {items.map(([icon, label, caret]) => (
      <button key={label} className="flex h-[22px] items-center gap-1 whitespace-nowrap">
        <Icon name={icon} />
        {label}
        {caret && <Caret className="ml-1" />}
      </button>
    ))}
  </div>
);

const sketchTools: [IconName, string][] = [
  ["profile", "Profile"],
  ["rect", "Rectangle"],
  ["line", "Line"],
  ["arc", "Arc"],
  ["circle", "Circle"],
  ["plus", "Point"],
];

const Ribbon = () => (
  <div className="flex h-[86px] shrink-0 border-b border-[#d3dbda] bg-white pt-px text-[11px] text-[#222]">
    <Group title="Direct Sketch" className="w-[180px]">
      <BigButton icon="studio" lines={["Sketch"]} className="w-[59px]" />
      <div className="mt-1 grid h-[66px] w-[98px] grid-cols-3 border border-[#e2e2e2]">
        {sketchTools.map(([icon, label]) => (
          <button key={label} aria-label={label} className="flex items-center justify-center">
            <Icon name={icon} className="size-[22px]" />
          </button>
        ))}
      </div>
      <div className="flex h-full w-[18px] flex-col items-center justify-around pt-1">
        <svg viewBox="0 0 7 4" className="h-1 w-[7px]" aria-hidden="true">
          <path d="M1 4H6L3.500 1Z" fill="#999" />
        </svg>
        <Caret />
        <BarCaret />
      </div>
    </Group>

    <Group title="Feature" className="w-[425px]">
      <BigButton icon="datumPlane" lines={["Datum", "Plane"]} caret className="ml-1 w-[50px]" />
      <BigButton icon="extrude" lines={["Extrude"]} caret className="w-[44px]" />
      <BigButton icon="hole" lines={["Hole"]} className="w-[44px]" />
      <SmallButtons
        className="ml-[5px] w-[102px]"
        items={[
          ["patternFeature", "Pattern Feature"],
          ["unite", "Unite", true],
          ["shell", "Shell"],
        ]}
      />
      <BigButton icon="edgeBlend" lines={["Edge", "Blend"]} caret className="w-[48px]" />
      <SmallButtons
        className="ml-[5px] w-[81px]"
        items={[
          ["chamfer", "Chamfer"],
          ["trimBody", "Trim Body"],
          ["draft", "Draft"],
        ]}
      />
      <BigButton icon="moreFeature" lines={["More"]} caret boxed className="w-[36px]" />
    </Group>

    <Group title="Synchronous Modeling" className="w-[199px]">
      <BigButton icon="moveFace" lines={["Move", "Face"]} className="ml-1 w-[48px]" />
      <SmallButtons
        className="ml-px w-[103px]"
        items={[
          ["offsetRegion", "Offset Region"],
          ["replaceFace", "Replace Face"],
          ["deleteFace", "Delete Face"],
        ]}
      />
      <BigButton icon="moreSync" lines={["More"]} caret boxed className="w-[36px]" />
    </Group>

    <Group title="Surface" className="w-[237px]">
      <BigButton icon="curveMesh" lines={["Through", "Curve Mesh"]} className="ml-1 w-[76px]" />
      <SmallButtons
        className="w-[114px]"
        items={[
          ["throughCurves", "Through Curves"],
          ["swept", "Swept"],
          ["fillSurface", "Fill Surface"],
        ]}
      />
      <BigButton icon="moreSurface" lines={["More"]} caret boxed className="w-[36px]" />
    </Group>

    <Group title="Assemblies" className="w-[248px]">
      <BigButton icon="workOn" lines={["Work on", "Assembly"]} disabled className="ml-[5px] w-[60px]" />
      <BigButton icon="add" lines={["Add"]} caret className="w-[36px]" />
      <SmallButtons
        className="ml-2"
        items={[
          ["constraints", "Assembly Constraints"],
          ["moveComponent", "Move Component"],
          ["patternComponent", "Pattern Component"],
        ]}
      />
    </Group>
    <div className="ml-auto flex items-end pb-2 pr-[6px]">
      <Caret />
    </div>
  </div>
);

const FilterSelect = ({ label, value, className }: { label: string; value: string; className: string }) => (
  <div className={`relative flex h-[18px] shrink-0 items-center border border-[#8b9696] bg-white ${className}`}>
    <select aria-label={label} className="h-4 w-full appearance-none bg-transparent pl-1 pr-4 text-[11px] leading-4 outline-none">
      <option>{value}</option>
    </select>
    <svg viewBox="0 0 8 5" className="pointer-events-none absolute right-[5px] h-[5px] w-2" aria-hidden="true">
      <path d="M0 0H8L4 5Z" fill="#111" />
    </svg>
  </div>
);

// third entry marks a pressed snap toggle
const snapTools: [IconName, string, boolean?][] = [
  ["grayBlock", "General Objects"],
  ["blueBlock", "Solid Body"],
  ["snapAll", "Enable Snap Point", true],
  ["endPoint", "End Point", true],
  ["midPoint", "Mid Point", true],
  ["controlPoint", "Control Point"],
  ["pole", "Pole", true],
  ["intersection", "Intersection Point"],
  ["arcCenter", "Arc Center", true],
  ["quadrant", "Quadrant Point"],
  ["existingPoint", "Existing Point", true],
  ["pointOnCurve", "Point on Curve", true],
  ["pointOnSurface", "Point on Surface"],
  ["grid", "Bounded Grid Point"],
  ["redCube", "Work Section"],
  ["plane", "Plane"],
  ["zebra", "Face Analysis"],
  ["twoCubes", "Move Object"],
  ["yellowBox", "Assign Feature"],
  ["wireYellow", "Wireframe"],
  ["purpleFilter", "Section Filter"],
];

const viewTools: [IconName, string, boolean?][] = [
  ["fit", "Fit"],
  ["zoomWin", "Zoom"],
  ["rotate", "Rotate"],
  ["layout", "Layout", true],
  ["shading", "Edit Section", true],
  ["blueCube", "Rendering Style", true],
  ["colorDots", "Show and Hide", true],
];

const SelectionBar = () => (
  <div className="flex h-[29px] shrink-0 items-center border-b border-[#8d8d8d] bg-white text-[11px] text-[#222]">
    <button className="flex w-[76px] items-center gap-1 pl-[10px]">
      <Icon name="menu" />
      <span>
        <u>M</u>enu
      </span>
      <Caret />
    </button>
    <Divider />
    <FilterSelect label="Type filter" value="No Selection Filter" className="ml-[11px] w-[121px]" />
    <FilterSelect label="Selection scope" value="Entire Assembly" className="ml-[9px] w-[127px]" />
    <IconButton icon="filterGray" label="Reset filters" className="ml-1 w-[25px]" />
    <IconButton icon="filterGray2" label="Deselect" className="w-[25px]" />
    <IconButton icon="snapBox" label="Allow selection" className="w-5" />
    <Caret className="mx-1" />
    <IconButton icon="moveGray" label="Move" className="w-[25px]" />
    <IconButton icon="copyGray" label="Copy objects" className="w-[25px]" />
    <IconButton icon="marquee" label="Rectangle select" className="w-[25px]" />
    <Caret className="mr-1" />
    {snapTools.map(([icon, label, on]) => (
      <button key={label} aria-label={label} aria-pressed={!!on} className={`mx-px flex h-[23px] w-[23px] shrink-0 items-center justify-center ${on ? "border border-[#b5c8c4] bg-[#c9d8d5]" : ""}`}>
        <Icon name={icon} />
      </button>
    ))}
    <span className="w-[5px]" />
    <Divider />
    <span className="w-[7px]" />
    {viewTools.map(([icon, label, caret]) => (
      <React.Fragment key={label}>
        <IconButton icon={icon} label={label} className="w-[25px]" />
        {caret && <Caret className="mr-1" />}
      </React.Fragment>
    ))}
    <span className="w-2" />
    <Divider />
    <Caret className="ml-auto mr-[6px]" />
  </div>
);

const railItems: [IconName, string, string][] = [
  ["assemblyNav", "Assembly Navigator", "pl-[7px]"],
  ["constraintNav", "Constraint Navigator", "pl-[7px]"],
  ["partNav", "Part Navigator", "-mr-px ml-[3px] border-y border-[#c0c0c0] bg-white pl-1"],
  ["books", "Reuse Library", "pl-[7px]"],
  ["info", "HD3D Tools", "mt-3 pl-[7px]"],
  ["page", "Web Browser", "mt-3 pl-[7px]"],
  ["clock", "History", "mt-3 pl-[7px]"],
  ["spectrum", "System Materials", "pl-[7px]"],
  ["blueTools", "Process Studio", "pl-[7px]"],
  ["robot", "Manufacturing Wizards", "pl-[7px]"],
  ["doorRed", "Roles", "pl-[7px]"],
  ["doorList", "System Scenes", "pl-[7px]"],
  ["doorGreen", "Touch Panel", "pl-[7px]"],
];

const ResourceRail = () => (
  <aside className="flex w-8 shrink-0 flex-col border-r border-[#a8a8a8] bg-[#dcdcdc]">
    <IconButton icon="gear" label="Resource bar options" className="mb-[18px] w-[30px]" />
    {railItems.map(([icon, label, spacing]) => (
      <button key={label} aria-label={label} className={`flex h-[42px] shrink-0 items-center ${spacing}`}>
        <Icon name={icon} className="size-[22px]" />
      </button>
    ))}
  </aside>
);

// x positions: 10 is the root guide line, 29 the one under Model History
const RootGuide = ({ sign, first, last }: { sign?: string; first?: boolean; last?: boolean }) => (
  <svg viewBox="0 0 19 20" className="h-5 w-[19px] shrink-0" aria-hidden="true">
    <path d={`M10 ${first ? 10 : 0}V${last ? 10 : 20}M10 10H19`} stroke="#999" strokeDasharray="1 1" />
    {sign && <rect x="6" y="6" width="8" height="8" fill="#fff" stroke="#d8d8d8" />}
    {sign && <path d="M7.500 10H12.500" stroke="#111" />}
    {sign === "+" && <path d="M10 7.500V12.500" stroke="#111" />}
  </svg>
);

const ChildGuide = ({ last }: { last?: boolean }) => (
  <svg viewBox="0 0 41 20" className="h-5 w-[41px] shrink-0" aria-hidden="true">
    <path d={`M29.500 0V${last ? 10 : 20}M29.500 10H39`} stroke="#999" strokeDasharray="1 1" />
  </svg>
);

const FeatureCheck = ({ label }: { label: string }) => (
  <span className="relative flex size-3 shrink-0">
    <input type="checkbox" defaultChecked aria-label={label} className="size-3 appearance-none border border-black bg-white" />
    <Icon name="tick" className="pointer-events-none absolute inset-0 size-3" />
  </span>
);

interface TreeRow {
  name: React.ReactNode;
  layer?: string;
  upToDate?: boolean;
  bold?: boolean;
}

const rows: TreeRow[] = [
  { name: <><RootGuide first /><Icon name="clock" /><span className="pl-1">History Mode</span></> },
  { name: <><RootGuide sign="+" /><Icon name="modelViews" /><span className="pl-1">Model Views</span></> },
  { name: <><RootGuide sign="+" /><Icon name="tick" /><Icon name="camera" /><span className="pl-1">Cameras</span></> },
  { name: <><RootGuide sign="-" last /><Icon name="folder" /><span className="pl-1">Model History</span></> },
  { name: <><ChildGuide /><FeatureCheck label="Datum Coordinate System" /><Icon name="csys" className="ml-px size-4" /><span className="truncate pl-1">Datum Coordinate Sy...</span></>, layer: "61", upToDate: true },
  { name: <><ChildGuide last /><FeatureCheck label="Revolve (1)" /><Icon name="revolve" className="ml-px size-4" /><span className="pl-1">Revolve (1)</span></>, layer: "1", upToDate: true, bold: true },
  ...Array.from({ length: 60 }, () => ({ name: null })),
];

const cell = "border-b border-r border-[#ececec] p-0";

const PartNavigator = () => (
  <section className="flex w-[333px] shrink-0 flex-col border-r border-[#8d8d8d] bg-white text-[11px] text-[#222]">
    <div className="flex h-[29px] shrink-0 items-center justify-between pl-[10px] pr-4">
      <h2>Part Navigator</h2>
      <button aria-label="Maximize panel" className="h-[10px] w-3 border border-t-2 border-black" />
    </div>
    <div className="ml-[6px] mr-[9px] flex min-h-0 flex-1 flex-col border border-[#cfcfcf]">
      <div className="min-h-0 flex-1 overflow-hidden">
        <table className="w-full table-fixed border-separate border-spacing-0">
          <thead>
            <tr className="h-5 bg-[#f0f0f0] text-left">
              <th className="w-[201px] border-b border-r border-[#d5d5d5] p-0 pl-[7px] font-normal">
                <span className="flex items-center gap-4">
                  Name
                  <svg viewBox="0 0 9 5" className="h-[5px] w-[9px]" aria-hidden="true">
                    <path d="M0 5H9L4.500 0Z" fill="#222" />
                  </svg>
                </span>
              </th>
              <th className="w-10 border-b border-r border-[#d5d5d5] p-0 pl-[6px] font-normal">Layer</th>
              <th className="w-10 border-b border-r border-[#d5d5d5] p-0 pl-[6px] font-normal">Up ...</th>
              <th className="border-b border-[#d5d5d5] p-0 pl-[6px] font-normal">Com</th>
            </tr>
          </thead>
          <tbody>
            {rows.map((row, i) => (
              <tr key={i} className={`h-5 odd:bg-white even:bg-[#f9f9f9] ${row.bold ? "font-bold" : ""}`}>
                <td className={cell}>
                  <div className="flex h-[19px] items-center overflow-hidden">{row.name}</div>
                </td>
                <td className={`${cell} pl-1`}>{row.layer}</td>
                <td className={`${cell} pl-[5px]`}>{row.upToDate && <Icon name="tick" className="size-[14px]" />}</td>
                <td className={cell} />
              </tr>
            ))}
          </tbody>
        </table>
      </div>
      <div className="flex h-4 shrink-0 items-center bg-[#f0f0f0]">
        <button aria-label="Scroll left" className="flex w-[18px] justify-center">
          <svg viewBox="0 0 6 8" className="h-2 w-[6px]" aria-hidden="true">
            <path d="M5 0.500 1.500 4 5 7.500" fill="none" stroke="#333" strokeWidth={1.600} />
          </svg>
        </button>
        <div className="flex-1">
          <div className="h-4 w-[82%] bg-[#cdcdcd]" />
        </div>
        <button aria-label="Scroll right" className="flex w-[18px] justify-center">
          <svg viewBox="0 0 6 8" className="h-2 w-[6px]" aria-hidden="true">
            <path d="M1 0.500 4.500 4 1 7.500" fill="none" stroke="#333" strokeWidth={1.600} />
          </svg>
        </button>
      </div>
    </div>
    <div className="mb-[6px] ml-[6px] mr-[9px] mt-px h-[6px] shrink-0 border border-[#a5a5a5] bg-[#dcdcdc]" />
  </section>
);

const bodyStops: [number, string][] = [
  [0, "#6b7b7f"],
  [5, "#6f7d80"],
  [12, "#748184"],
  [17, "#7c8a8d"],
  [23, "#8c9b9e"],
  [29, "#96a6a9"],
  [36, "#9dadb2"],
  [41, "#9fb3b8"],
  [50, "#a2b7bb"],
  [60, "#a8bfc3"],
  [68, "#abc2c6"],
  [73, "#a3b9bd"],
  [79, "#98aaae"],
  [90, "#93a3a6"],
  [96, "#8b9b9e"],
  [100, "#819194"],
];

// tessellation bands on the cylinder face
const facets = Array.from({ length: 19 }, (_, i) => 306 + i * 50);

const Viewport = () => (
  <main className="relative min-w-0 flex-1 bg-[linear-gradient(to_bottom,#b4b4b4_0%,#c3c3c3_20%,#d0d0d1_38%,#dededf_58%,#e6e7e8_76%,#e7e7e7_100%)]">
    <svg viewBox="0 0 1555 851" className="absolute inset-0 h-full w-full" role="img" aria-label="Rubber bush model">
      <defs>
        <linearGradient id="body">
          {bodyStops.map(([offset, color]) => (
            <stop key={offset} offset={`${offset}%`} stopColor={color} />
          ))}
        </linearGradient>
      </defs>
      <path d="M293 198.500 455 176H1103L1264 198.500Z" fill="#abc1c6" />
      <path d="M455 176.500H1103" stroke="#56686c" />
      <rect x="293" y="198" width="971" height="457" fill="url(#body)" />
      {facets.map((x, i) => (
        <rect key={x} x={x} y="199" width={i % 3 === 0 ? 26 : 17} height="456" fill={i % 2 ? "#fff" : "#3d5055"} fillOpacity={0.03} />
      ))}
      <path d="M293 198.500H1264" stroke="#6d8084" strokeWidth={1.500} />
      <path d="M293 655H1264L1103 678H455Z" fill="#3d4244" />
      <path d="M293.500 198V655M1263.500 198V655" stroke="#5d6c70" />
      <g stroke="#dbe8ea" fill="none">
        <path d="M779.500 427V345M779.500 386.500H822.500V427" strokeOpacity={0.6} />
        <path d="M783 427H848" strokeWidth={1.500} />
        <path d="M779.500 421V433M774 427H785M776 423 783 431M783 423 776 431" />
      </g>
      <path d="M846 423 861 427 846 431Z" fill="#e6f0f0" />
      <text x="775" y="343" fontSize="14" fill="#c9d8da" fontFamily="Liberation Sans, sans-serif">Z</text>
      <text x="864" y="432" fontSize="13" fill="#c0d0d3" fontFamily="Liberation Sans, sans-serif">X</text>
    </svg>
    <svg viewBox="0 0 1555 851" className="absolute inset-0 h-full w-full drop-shadow-[1px_2px_0_#707a7c]">
      <text fill="#e4eaea">
        <tspan x="215" y="385" fontSize="80" fontWeight="300" fontFamily="Noto Sans CJK SC, sans-serif">莫西网</tspan>
        <tspan y="381" fontSize="73" fontFamily="Liberation Serif, serif">www.3dmox.com</tspan>
      </text>
    </svg>
    <svg viewBox="0 0 70 75" className="absolute bottom-[53px] left-[55px] h-[75px] w-[70px]" aria-label="View triad">
      <rect x="14" y="31" width="25" height="27" fill="#d3d3d3" stroke="#b5b5b5" />
      <path d="M11.500 58V22" stroke="#2440b4" strokeWidth={3} />
      <path d="M8 25 11.500 13 15 25Z" fill="#2440b4" />
      <path d="M14 59H50" stroke="#b03030" strokeWidth={3} />
      <path d="M46 55.500 57 59 46 62.500Z" fill="#b03030" />
      <circle cx="11.500" cy="59" r="3.500" fill="#8fa08c" stroke="#5c6c5c" />
      <text x="7" y="12" fontSize="12" fill="#3a56b8" fontFamily="Liberation Sans, sans-serif">Z</text>
      <text x="59" y="64" fontSize="12" fill="#b84a4a" fontFamily="Liberation Sans, sans-serif">X</text>
    </svg>
  </main>
);

const StatusBar = () => (
  <footer className="shrink-0">
    <div className="flex h-[22px] items-center border-t border-[#8d8d8d] bg-white pb-[2px] pl-[3px] pr-7 text-[11px] leading-4 text-[#222]">
      <p className="flex-1 font-['Open_Sans'] font-semibold">Select objects and use MB3, or double-click an object</p>
      <Icon name="statusChart" className="mr-1 size-4" />
      <Icon name="fullscreen" className="mr-[11px] size-4" />
      <Icon name="ball" />
    </div>
    <div className="flex h-2 items-start overflow-hidden bg-linear-to-r from-[#203643] to-[#1a2644]">
      <span className="ml-[392px] h-2 w-12 bg-[#4b6166]" />
      <span className="ml-auto mr-16 pt-1 text-[11px] leading-3 text-white">04:38 PM</span>
    </div>
  </footer>
);

const App = () => (
  <div className="flex h-screen flex-col overflow-hidden bg-white font-['Noto_Sans',sans-serif] text-[#222]">
    <TitleBar />
    <TabBar />
    <Ribbon />
    <SelectionBar />
    <div className="flex min-h-0 flex-1">
      <ResourceRail />
      <PartNavigator />
      <Viewport />
    </div>
    <StatusBar />
  </div>
);

export default App;
